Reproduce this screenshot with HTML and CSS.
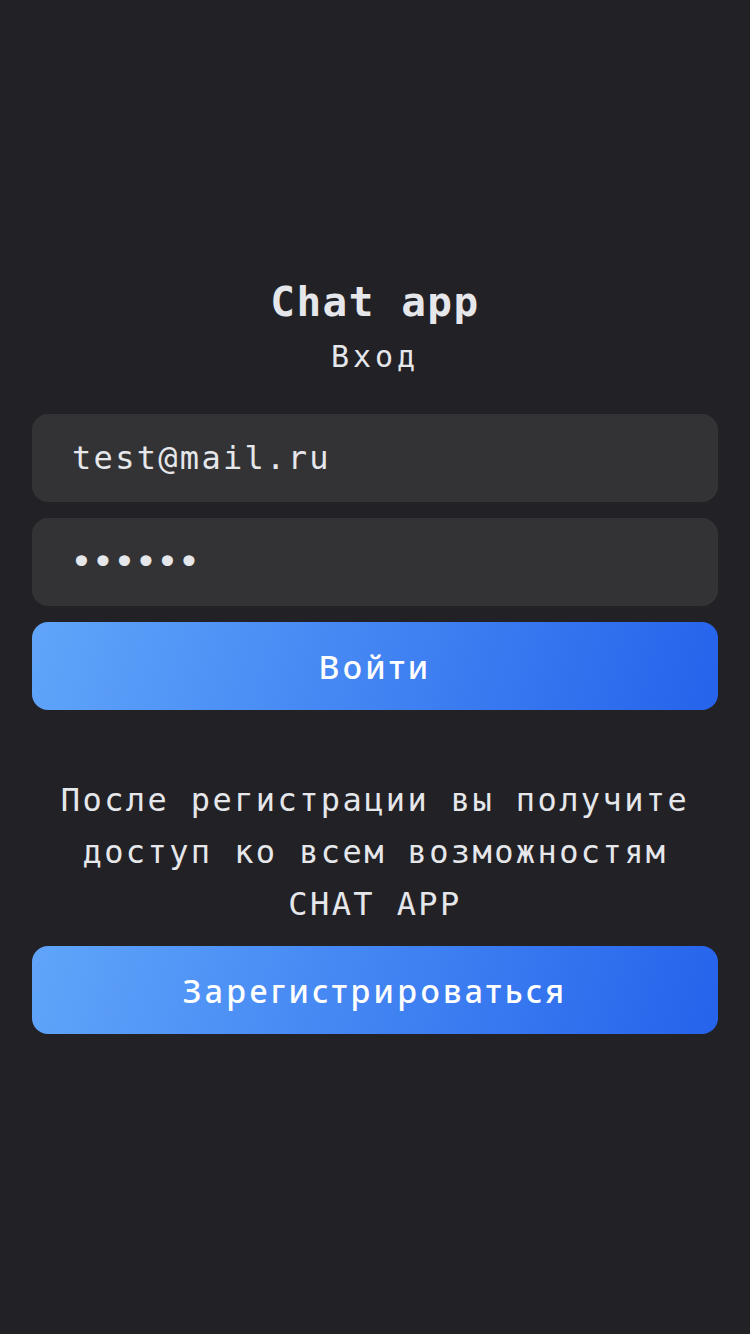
FILE: index.html
```html
<!DOCTYPE html>
<html lang="ru">
<head>
<meta charset="utf-8">
<title>Chat app — Вход</title>
<link rel="stylesheet" href="styles.css">
</head>
<body>
<main class="page">
  <header class="head">
    <h1 class="title">Chat app</h1>
    <h2 class="subtitle">Вход</h2>
  </header>
  <form class="form">
    <input class="field" type="email" value="test@mail.ru">
    <input class="field field-pass" type="password" value="123456">
    <button class="btn" type="button">Войти</button>
  </form>
  <p class="note">После регистрации вы получите доступ ко всем возможностям CHAT APP</p>
  <button class="btn" type="button">Зарегистрироваться</button>
</main>
</body>
</html>
```
FILE: styles.css
```css
html, body {
  margin: 0;
  padding: 0;
  background: #222126;
  height: 100%;
}
body {
  font-family: "DejaVu Sans Mono", "Liberation Mono", monospace;
  color: #e5e7eb;
}
.page {
  display: flex;
  flex-direction: column;
  padding: 276px 32px 0;
  box-sizing: border-box;
}
.head {
  display: flex;
  flex-direction: column;
  align-items: center;
  gap: 9px;
  margin-bottom: 37px;
}
.title {
  margin: 0;
  font-size: 41px;
  line-height: 52px;
  font-weight: 700;
  letter-spacing: 1.5px;
}
.subtitle {
  margin: 0;
  font-size: 30px;
  line-height: 40px;
  font-weight: 400;
  letter-spacing: 4px;
}
.form {
  display: flex;
  flex-direction: column;
  gap: 16px;
}
.field {
  display: block;
  width: 100%;
  box-sizing: border-box;
  height: 88px;
  border: 0;
  border-radius: 16px;
  background: #333335;
  color: #e5e7eb;
  padding: 0 40px;
  font-family: "DejaVu Sans Mono", "Liberation Mono", monospace;
  font-size: 32px;
  letter-spacing: 2.3px;
  outline: none;
}
.field-pass {
  font-size: 38px;
  letter-spacing: -1.4px;
  padding-left: 38px;
}
.btn {
  display: block;
  width: 100%;
  height: 88px;
  border: 0;
  border-radius: 16px;
  background: linear-gradient(105deg, #60a5fa, #2563eb);
  color: #ffffff;
  font-family: "Noto Sans", "Open Sans", sans-serif;
  font-size: 32px;
  font-weight: 500;
  letter-spacing: 3.4px;
  padding: 0;
}
.note {
  margin: 64px 0 16px;
  text-align: center;
  font-size: 32px;
  line-height: 52px;
  letter-spacing: 2.4px;
  padding: 0 10px;
}
```
